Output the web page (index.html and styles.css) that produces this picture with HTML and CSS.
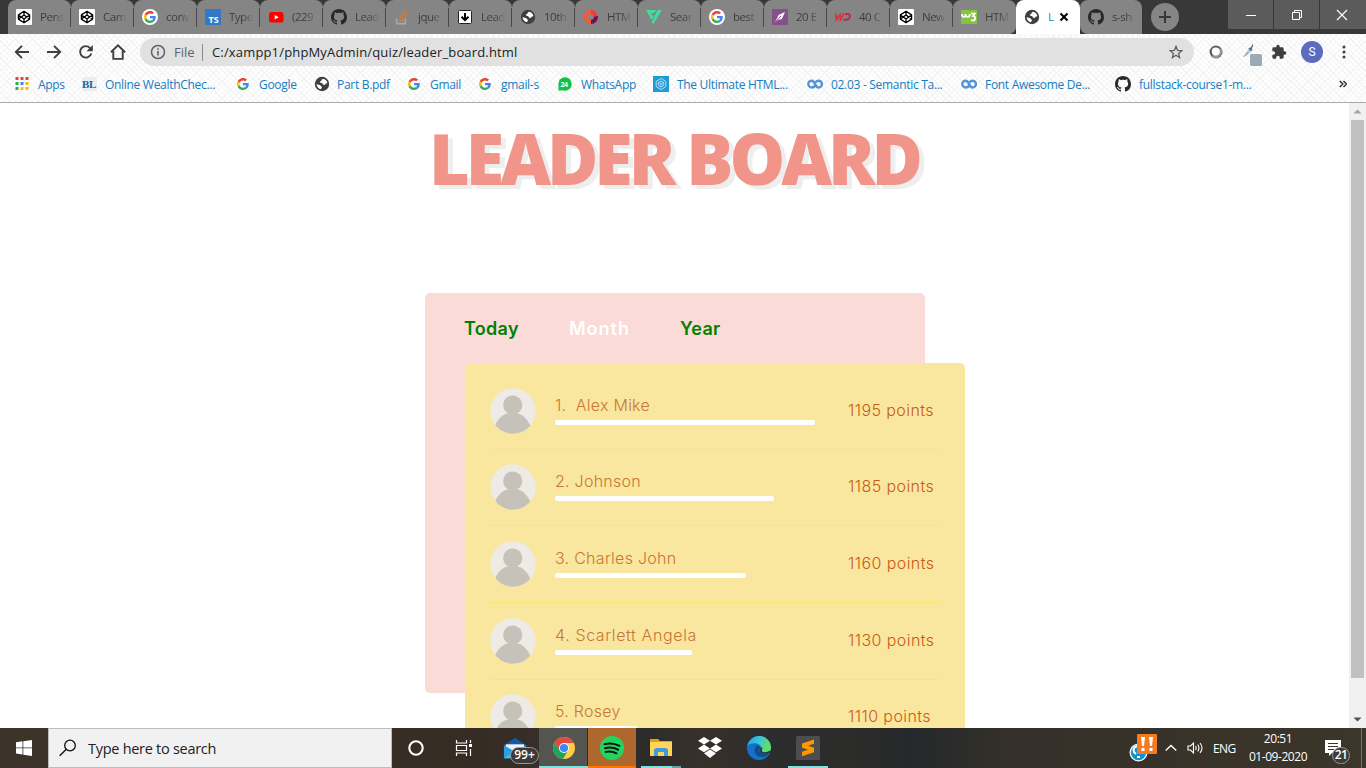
FILE: index.html
```html
<!DOCTYPE html>
<html lang="en">
<head>
<meta charset="utf-8">
<title>Leader Board</title>
<link rel="stylesheet" href="styles.css">
</head>
<body>
<svg class="defs" width="0" height="0">
  <defs>
    <symbol id="codepen" viewBox="0 0 16 16"><rect width="16" height="16" rx="1" fill="#fff"/><path d="M8 2.2 13.6 5.9v4.2L8 13.8 2.4 10.1V5.9zM8 2.2v3.7M8 10.100v3.700M2.400 5.900 8 10.100l5.600-4.200M2.400 10.100 8 5.900l5.600 4.200" fill="none" stroke="#000" stroke-width="1.3" stroke-linejoin="round"/></symbol>
    <symbol id="google" viewBox="0 0 48 48"><path fill="#ea4335" d="M24 9.500c3.500 0 6.700 1.200 9.200 3.600l6.900-6.900C35.900 2.400 30.500 0 24 0 14.600 0 6.500 5.400 2.600 13.200l8 6.200C12.400 13.700 17.700 9.500 24 9.500z"/><path fill="#4285f4" d="M47 24.600c0-1.600-.2-3.100-.4-4.600H24v9h12.900c-.6 3-2.200 5.500-4.700 7.200l7.700 6C44.400 38 47 31.800 47 24.600z"/><path fill="#fbbc05" d="M10.500 28.600c-.5-1.500-.8-3-.8-4.600s.3-3.100.8-4.600l-8-6.200C.9 16.500 0 20.100 0 24s.9 7.500 2.600 10.800z"/><path fill="#34a853" d="M24 48c6.500 0 11.900-2.100 15.900-5.800l-7.700-6c-2.200 1.500-4.900 2.300-8.200 2.300-6.300 0-11.600-4.200-13.500-9.900l-8 6.200C6.500 42.600 14.600 48 24 48z"/></symbol>
    <symbol id="github" viewBox="0 0 16 16"><path fill="#24292e" d="M8 0C3.580 0 0 3.580 0 8c0 3.540 2.290 6.530 5.470 7.590.4.070.55-.17.55-.38 0-.19-.01-.82-.01-1.490-2.010.37-2.530-.49-2.690-.94-.09-.23-.48-.94-.82-1.130-.28-.15-.68-.52-.01-.53.63-.01 1.080.58 1.230.82.720 1.210 1.870.87 2.330.66.070-.52.280-.87.510-1.070-1.780-.2-3.640-.89-3.640-3.950 0-.87.310-1.590.82-2.150-.08-.2-.36-1.020.08-2.120 0 0 .67-.21 2.200.82.640-.18 1.320-.27 2-.27s1.360.09 2 .27c1.530-1.040 2.200-.82 2.200-.82.440 1.100.16 1.920.08 2.120.51.560.82 1.270.82 2.150 0 3.070-1.870 3.750-3.650 3.950.29.250.54.730.54 1.480 0 1.070-.01 1.930-.01 2.200 0 .21.150.46.550.38A8.010 8.010 0 0 0 16 8c0-4.420-3.580-8-8-8z"/></symbol>
    <symbol id="globe" viewBox="0 0 16 16"><circle cx="8" cy="8" r="7.200" fill="#3f3f3f"/><path class="land" d="M8.800 2.800c2.600.2 4.300 2.300 4.600 4.400l-1.500.4-1.100 1.300-2-.3-.6-1.500-1.600 0-.8-1.500 1.600-.9.300-1zM2.500 8.200l3.300.7 1.500 1.300.7.800-1 2.200C4.500 12.800 2.800 10.800 2.500 8.200z"/></symbol>
    <symbol id="youtube" viewBox="0 0 16 16"><rect x="1" y="3" width="14.500" height="10.500" rx="2.500" fill="#f00"/><path d="M6.700 5.900v4.600l4-2.300z" fill="#fff"/></symbol>
    <symbol id="coursera" viewBox="0 0 16 10"><path d="M8.300 6.500C7.300 8 6 8.500 4.700 8.500a3.400 3.400 0 1 1 0-6.800c3.600 0 3.300 6.800 6.800 6.800a3.400 3.400 0 1 0 0-6.800c-1.200 0-2.200.7-2.900 1.600" fill="none" stroke="#5294d6" stroke-width="2.400"/></symbol>
    <symbol id="person" viewBox="0 0 46 46"><clipPath id="disc"><circle cx="23" cy="23" r="22.700"/></clipPath><circle cx="23" cy="23" r="22.700" fill="#eeebe6"/><g clip-path="url(#disc)" fill="#c6c2ba"><circle cx="22.700" cy="17" r="9.600"/><path d="M18 22h9.500v3.500c6 1 11 7 13.300 13.500L38 46H8L4.500 39C7 32 12 26.500 18 25.500z"/></g></symbol>
  </defs>
</svg>

<div class="screen">
  <header class="browser">
    <div class="tabstrip">
      <div class="tabs">
        <div class="tab"><svg class="fav"><use href="#codepen"/></svg><span>Pens</span></div>
        <div class="tab"><svg class="fav"><use href="#codepen"/></svg><span>Cam</span></div>
        <div class="tab"><svg class="fav" viewBox="0 0 16 16"><circle cx="8" cy="8" r="8" fill="#fff"/><use href="#google" x="2" y="2" width="12" height="12"/></svg><span>con<small>v</small></span></div>
        <div class="tab"><svg class="fav" viewBox="0 0 16 16"><rect width="16" height="16" fill="#3178c6"/><text x="3.600" y="14" class="ts">TS</text></svg><span>Type</span></div>
        <div class="tab"><svg class="fav"><use href="#youtube"/></svg><span>(229</span></div>
        <div class="tab"><svg class="fav"><use href="#github"/></svg><span>Lead</span></div>
        <div class="tab"><svg class="fav" viewBox="0 0 16 16"><path d="M2.500 9.500v5.200h9V9.500" fill="none" stroke="#aaa" stroke-width="1.400"/><path d="M4 12.700h6M4.300 10.200l6 1M5.200 7.100l5.400 2.700M7.200 3.900l4.500 4M10.300 1.300l2.900 5" stroke="#e87922" stroke-width="1.200"/></svg><span>jque</span></div>
        <div class="tab"><svg class="fav" viewBox="0 0 16 16"><rect x="1.500" y="1.500" width="13" height="13" rx="1" fill="#fff" stroke="#222"/><path d="M8 4v7M4.500 7.700 8 11.200l3.500-3.500" fill="none" stroke="#000" stroke-width="2"/></svg><span>Lead</span></div>
        <div class="tab"><svg class="fav gray"><use href="#globe"/></svg><span>10th</span></div>
        <div class="tab"><svg class="fav" viewBox="0 0 16 16"><path d="M8 15A7 7 0 1 1 8 .8v4.400a3 3 0 1 0 0 5.600z" fill="#ff5436"/><path d="M8 .8a7.100 7.100 0 0 1 5 11.500L10 10a3 3 0 0 0-2-4.800z" fill="#f23b42"/><path d="M15 7c0 5-3 8-7 8v-4.200c2 0 3-1 3-3z" fill="#6d1550"/></svg><span>HTM</span></div>
        <div class="tab"><svg class="fav" viewBox="0 0 16 16"><path d="M0 1h10L8.500 4H5.200l2.200 4L5.500 11zM11.500 1H16L7 15.500 5.800 13 8 9h-.8l1.300-2.800H9z" fill="#42dc9c"/></svg><span>Sear</span></div>
        <div class="tab"><svg class="fav" viewBox="0 0 16 16"><circle cx="8" cy="8" r="8" fill="#fff"/><use href="#google" x="2" y="2" width="12" height="12"/></svg><span>best</span></div>
        <div class="tab"><svg class="fav" viewBox="0 0 16 16"><rect width="16" height="16" fill="#86508c"/><path d="M13 3 9.800 10 6 11 3 13l2-3.500L6.500 6z" fill="#fff"/><path d="M4 12.500 9 7" stroke="#86508c"/></svg><span>20 E</span></div>
        <div class="tab"><svg class="fav" viewBox="0 0 16 16"><path d="M.5 4.500 1.500 10.500 5 6l.5 4.500L9 4.500" fill="none" stroke="#d83349" stroke-width="2"/><path d="M10 5h3c3 0 2.500 5.700-2 5.700H8.500" fill="none" stroke="#c42942" stroke-width="2"/></svg><span>40 C</span></div>
        <div class="tab"><svg class="fav"><use href="#codepen"/></svg><span>New</span></div>
        <div class="tab last"><svg class="fav" viewBox="0 0 16 16"><rect y="1" width="16" height="14" fill="#86c440"/><path d="M1 5c0 4 3.500 4 3.500 0 0 4 4.300 4 4.300 0M10 4.500h4L12 7c3 0 3 5-.5 4.500L10 11" fill="none" stroke="#fff" stroke-width="1.700"/></svg><span>HTM</span></div>
      </div>
      <div class="tab active"><svg class="fav"><use href="#globe"/></svg><span>L</span><svg class="close" viewBox="0 0 10 10"><path d="m1.500 1.500 7 7m0-7-7 7" stroke="#000" stroke-width="2"/></svg></div>
      <div class="tab after"><svg class="fav"><use href="#github"/></svg><span>s-sh</span></div>
      <div class="newtab"><svg viewBox="0 0 28 28"><circle cx="14" cy="14" r="14" fill="#858585"/><path d="M14 8v12M8 14h12" stroke="#383838" stroke-width="2"/></svg></div>
      <div class="winbtns">
        <i><svg viewBox="0 0 12 12"><path d="M1 6.500h10" stroke="#fff"/></svg></i>
        <i><svg viewBox="0 0 12 12"><path d="M1.500 3.500h7v7h-7zM3.500 3.500v-2h7v7h-2" fill="none" stroke="#fff"/></svg></i>
        <i><svg viewBox="0 0 12 12"><path d="m1 1 10 10m0-10L1 11" stroke="#fff" stroke-width="1.200"/></svg></i>
      </div>
    </div>

    <div class="toolbar">
      <svg class="nav" viewBox="0 0 16 16"><path d="M15 8H2M8 1.800 1.800 8 8 14.200" fill="none" stroke="#3c4043" stroke-width="1.900"/></svg>
      <svg class="nav" viewBox="0 0 16 16"><path d="M1 8h13M8 1.800 14.200 8 8 14.200" fill="none" stroke="#3c4043" stroke-width="1.900"/></svg>
      <svg class="nav" viewBox="0 0 16 16"><path d="M13.300 9.500A5.700 5.700 0 1 1 12.300 4.300L14 6" fill="none" stroke="#3c4043" stroke-width="1.900"/><path d="M14.800 1v6.300H8.500z" fill="#3c4043"/></svg>
      <svg class="nav" viewBox="0 0 16 16"><path d="M.9 8.200 8 1.300l7.100 6.900M3.300 7v7.900h9.400V7" fill="none" stroke="#3c4043" stroke-width="1.900"/></svg>
      <div class="address">
        <svg class="info" viewBox="0 0 16 16"><circle cx="8" cy="8" r="6.500" fill="none" stroke="#5f6368" stroke-width="1.500"/><path d="M8 7v4.500M8 4.200v1.600" stroke="#5f6368" stroke-width="1.600"/></svg>
        <span class="scheme">File</span><span class="url">C:/xampp1/phpMyAdmin/quiz/leader_board.html</span>
        <svg class="star" viewBox="0 0 14 14"><path d="m7 1.300 1.600 4 4.200.3-3.200 2.800 1 4.200L7 10.300l-3.600 2.300 1-4.200L1.200 5.600l4.200-.3z" fill="none" stroke="#5f6368" stroke-width="1.300"/></svg>
      </div>
      <svg class="ext ring" viewBox="0 0 14 14"><circle cx="7" cy="7" r="6.500" fill="#5f5f5f"/><path d="M12 3a6.500 6.500 0 0 1-9.500 8.500z" fill="#999"/><circle cx="6.800" cy="6.500" r="4" fill="#fff"/></svg>
      <svg class="ext picker" viewBox="0 0 20 22"><path d="m10.500 0 .8 1.200-1.300 3.600.4 1.200-1.400 1.500-2.800-2.800L7.700 3.500l1.100.1z" fill="#5b7187"/><path d="m6.500 5.500 2.300 2.300-4 3.700-1.500-2z" fill="#a8c6dd"/><path d="m5.500 8-4 4.500L3.500 12l2.500-2.500z" fill="#53bbd9" stroke="#e7a2b7" stroke-width=".8"/><rect x="8" y="10" width="12" height="12" rx="1.500" fill="#9aabb5"/></svg>
      <svg class="ext puzzle" viewBox="0 0 24 24"><path fill="#3c4043" d="M20.500 11H19V7a2 2 0 0 0-2-2h-4V3.500a2.500 2.500 0 0 0-5 0V5H4a2 2 0 0 0-2 2v3.800h1.500a2.700 2.700 0 0 1 0 5.400H2V20c0 1.100.9 2 2 2h3.800v-1.500a2.700 2.700 0 0 1 5.400 0V22H17a2 2 0 0 0 2-2v-4h1.500a2.500 2.500 0 0 0 0-5z"/></svg>
      <div class="profile">S</div>
      <svg class="dots" viewBox="0 0 4 14"><circle cx="2" cy="2" r="1.500" fill="#3c4043"/><circle cx="2" cy="7" r="1.500" fill="#3c4043"/><circle cx="2" cy="12" r="1.500" fill="#3c4043"/></svg>
    </div>

    <nav class="bookmarks">
      <a class="apps"><svg viewBox="0 0 14 14"><path d="M.5 0h3v3h-3zM5.500 0h3v3h-3zM10.500 0h3v3h-3z" fill="#ea4335"/><path d="M.5 5h3v3h-3zM.5 10h3v3h-3z" fill="#34a853"/><path d="M5.500 5h3v3h-3z" fill="#4285f4"/><path d="M10.500 5h3v3h-3zM5.500 10h3v3h-3zM10.500 10h3v3h-3z" fill="#fbbc05"/></svg>Apps</a>
      <a class="wealth"><b>BL</b>Online WealthChec...</a>
      <a class="goog"><svg><use href="#google"/></svg>Google</a>
      <a class="pdf"><svg><use href="#globe"/></svg>Part B.pdf</a>
      <a class="gm"><svg><use href="#google"/></svg>Gmail</a>
      <a class="gms"><svg><use href="#google"/></svg>gmail-s</a>
      <a class="wa"><svg viewBox="0 0 14 14"><circle cx="7" cy="7" r="6.700" fill="#12c143"/><path d="M.5 9v4.500H5z" fill="#12c143"/><text x="2.400" y="9.800" class="n24">24</text></svg>WhatsApp</a>
      <a class="ult"><svg viewBox="0 0 16 16"><rect width="16" height="16" fill="#219bd5"/><path d="m8 2.500 4.800 2.800v5.400L8 13.500l-4.800-2.800V5.300zM8 5l2.700 1.500v3L8 11 5.300 9.500v-3zM5.300 6.500 8 8l2.700-1.500M8 8v3" fill="none" stroke="#bce4f6" stroke-width=".9"/></svg>The Ultimate HTML...</a>
      <a class="sem"><svg><use href="#coursera"/></svg>02.03 - Semantic Ta...</a>
      <a class="fa"><svg><use href="#coursera"/></svg>Font Awesome De...</a>
      <a class="full"><svg><use href="#github"/></svg>fullstack-course1-m...</a>
      <svg class="more" viewBox="0 0 8 8"><path d="m.8 1 3 3-3 3M4.500 1l3 3-3 3" fill="none" stroke="#333" stroke-width="1.500"/></svg>
    </nav>
  </header>

  <main class="viewport">
    <div class="page">
      <h1>LEADER BOARD</h1>
      <section class="board">
        <div class="periods"><span class="today">Today</span><span class="month">Month</span><span class="year">Year</span></div>
        <div class="list">
          <div class="row"><svg class="avatar"><use href="#person"/></svg><div class="who"><span class="name n1">1.&nbsp; Alex Mike</span><div class="bar" style="width:260px"></div></div><span class="points">1195 points</span></div>
          <div class="row"><svg class="avatar"><use href="#person"/></svg><div class="who"><span class="name n2">2. Johnson</span><div class="bar" style="width:219px"></div></div><span class="points">1185 points</span></div>
          <div class="row"><svg class="avatar"><use href="#person"/></svg><div class="who"><span class="name n3">3. Charles John</span><div class="bar" style="width:191px"></div></div><span class="points">1160 points</span></div>
          <div class="row"><svg class="avatar"><use href="#person"/></svg><div class="who"><span class="name n4">4. Scarlett Angela</span><div class="bar" style="width:137px"></div></div><span class="points">1130 points</span></div>
          <div class="row"><svg class="avatar"><use href="#person"/></svg><div class="who"><span class="name n5">5. Rosey</span><div class="bar" style="width:82px"></div></div><span class="points">1110 points</span></div>
        </div>
      </section>
    </div>
    <div class="scrollbar">
      <svg viewBox="0 0 17 17"><path d="M4.500 10.500h8L8.500 6.500z" fill="#a3a3a3"/></svg>
      <div class="thumb"></div>
      <svg viewBox="0 0 17 17"><path d="M4.500 6.500h8l-4 4z" fill="#505050"/></svg>
    </div>
  </main>

  <footer class="taskbar">
    <div class="start"><svg viewBox="0 0 16 16"><path d="m0 2.300 6.500-1v6.200H0zM7.300 1.200 16 0v7.500H7.300zM0 8.300h6.500v6.200l-6.500-1zM7.300 8.300H16V16l-8.700-1.300z" fill="#fff"/></svg></div>
    <div class="search"><svg viewBox="0 0 18 18"><circle cx="11" cy="6.500" r="5.300" fill="none" stroke="#111" stroke-width="1.300"/><path d="m7.300 10.200-6.600 6.600" stroke="#111" stroke-width="1.400"/></svg><span>Type here to search</span></div>
    <div class="app cortana"><svg viewBox="0 0 24 24"><circle cx="12" cy="12" r="6.700" fill="none" stroke="#fff" stroke-width="2.100"/></svg></div>
    <div class="app tasks"><svg viewBox="0 0 24 24"><path d="M4.500 4v3h10V4M4.500 20v-3h10v3M4.500 9.500h10v5h-10zM18.500 4v3M18.500 13v7" fill="none" stroke="#fff" stroke-width="1.200"/><path d="M17 8h3v3h-3z" fill="#fff"/></svg></div>
    <div class="app mail"><svg viewBox="0 0 26 24"><path d="M1 9 13 1l12 8v4H1z" fill="#0f5ca8"/><path d="M3 8h20v8H3z" fill="#f2f2f2"/><path d="m1 9 12 7 12-7v14H1z" fill="#24a0e5"/><path d="m1 23 12-8 12 8z" fill="#41bdf4"/></svg><em>99+</em></div>
    <div class="app chrome"><svg viewBox="0 0 24 24"><circle cx="12" cy="12" r="11" fill="#ffcd46"/><path d="M12 1A11 11 0 0 0 2.500 6.500L7.700 15 12 7h9.800A11 11 0 0 0 12 1z" fill="#e04a3f"/><path d="M2.500 6.500A11 11 0 0 0 11 23l5-8.500-8.300 0z" fill="#1da362"/><circle cx="12" cy="12" r="5" fill="#fff"/><circle cx="12" cy="12" r="4.100" fill="#4285f4"/></svg></div>
    <div class="app spotify"><svg viewBox="0 0 24 24"><circle cx="12" cy="12" r="12" fill="#1ed760"/><path d="M4.500 8.200c5-1.400 10-1 15 1.600M5 12.200c4.500-1.200 8.800-.8 13 1.500M5.700 15.900c3.700-.9 7.200-.6 10.800 1.400" fill="none" stroke="#111" stroke-width="2" stroke-linecap="round"/></svg></div>
    <div class="app folder"><svg viewBox="0 0 24 24"><path d="M1 3h8l2 2h12v15H1z" fill="#e3a20c"/><path d="M1 6h22v14H1z" fill="#ffd45b"/><path d="M5 20v-6.500L7 12h10l2 1.500V20h-4v-4H9v4z" fill="#3f9be0"/></svg></div>
    <div class="app"><svg viewBox="0 0 24 24"><path d="m6 1 6 3.800-6 3.800L0 4.800zM18 1l6 3.800-6 3.800-6-3.800zM6 8.600l6 3.800-6 3.800-6-3.800zM18 8.600l6 3.800-6 3.800-6-3.800zM6 17.300l6-3.800 6 3.800-6 4.700z" fill="#fff"/></svg></div>
    <div class="app"><svg viewBox="0 0 24 24"><defs><linearGradient id="eg" x1="0" y1="0" x2="1" y2=".4"><stop offset="0" stop-color="#2399e0"/><stop offset=".5" stop-color="#36c7d8"/><stop offset="1" stop-color="#66e05c"/></linearGradient></defs><circle cx="12" cy="12" r="12" fill="#1471c8"/><path d="M.2 10A12 12 0 0 1 24 11c.3 4-3 6-6.500 6-3 0-5-1-3.500-3C16 10 11 6 5 7.500 2.500 8 1 9 .2 10z" fill="url(#eg)"/><path d="M9 10c-4 5 0 12 7 11 2.500 0 5-2 6.500-4-3 1.500-7 1.300-9-.5-1.800-1.500-1-3 0-4.200C13 10 11 9 9 10z" fill="#124c91"/><path d="M14 12c1.500 1-1 2 0 3.500 2 2.500 6.500 1.500 9 0" fill="none" stroke="#2b2c2e" stroke-width="1.600"/></svg></div>
    <div class="app sublime"><svg viewBox="0 0 24 24"><rect width="24" height="24" rx="1.500" fill="#4d4d4f"/><path d="m6 7.500 12-4v4.200l-6 2 6 2v4.500l-12 4v-4.500l6-2-6-2z" fill="#ff9800"/></svg></div>
    <div class="tray">
      <svg class="alert" viewBox="0 0 28 28"><circle cx="9.500" cy="18.500" r="9" fill="#fff"/><circle cx="9.500" cy="18.500" r="7.700" fill="#1590ce"/><path d="M8 12c-5 2-4 6-1 8M8 23h3" fill="none" stroke="#fff" stroke-width="2"/><rect x="8" width="20" height="20" rx="1" fill="#f47b20"/><path d="M12 3h4l-1 9h-2zM20 3h4l-1 9h-2zM12.500 14h3v3h-3zM20.500 14h3v3h-3z" fill="#fff"/></svg>
      <svg class="caret" viewBox="0 0 12 12"><path d="m.7 8.500 5.300-5 5.300 5" fill="none" stroke="#fff" stroke-width="1.300"/></svg>
      <svg class="volume" viewBox="0 0 17 14"><path d="M1 5h2.500L6.500 2v10L3.500 9H1z" fill="none" stroke="#fff" stroke-width="1.100"/><path d="M8.500 5q1.300 2 0 4M10.700 3.500q2.500 3.500 0 7M13 2q4 5 0 10" fill="none" stroke="#fff" stroke-width="1.100"/></svg>
      <span class="lang">ENG</span>
      <div class="clock"><span>20:51</span><span class="date">01-09-2020</span></div>
      <div class="notes"><svg viewBox="0 0 16 16"><path d="M0 0h16v13H7l-3 3v-3H0z" fill="#fff"/><path d="M3 3.500h10M3 6.500h10M3 9.500h6" stroke="#3a342a"/></svg><em>21</em></div>
    </div>
  </footer>
</div>
</body>
</html>
```
FILE: styles.css
```css
* { box-sizing: border-box; }
body { margin: 0; background: #fff; font-family: "Open Sans", "Noto Sans", sans-serif; overflow: hidden; }
svg { display: block; flex: none; }
.defs { position: absolute; }
.screen { width: 1366px; height: 768px; display: flex; flex-direction: column; }

.browser {
  height: 103px; flex: none; border-bottom: 1px solid #a9a9a9; background-color: #fff;
  background-image: repeating-linear-gradient(45deg, transparent 0 3px, #f3f3f3 3px 4px), repeating-linear-gradient(-45deg, transparent 0 3px, #f5f5f5 3px 4px);
}
.tabstrip { height: 34px; display: flex; background: linear-gradient(90deg, #383838 1000px, transparent 1000px 1100px, #383838 1100px); padding-left: 8px; }
.tabs { display: flex; background: linear-gradient(#383838 8px, #858585 8px); border-radius: 0 0 8px 0; }
.tab { width: 63px; height: 34px; display: flex; align-items: center; padding-left: 8px; background: #858585; border-radius: 8px 8px 0 0; position: relative; }
.tabs .tab::after { content: ""; position: absolute; right: 0; top: 8px; width: 1px; height: 19px; background: #484848; }
.tabs .last { border-radius: 8px 8px 8px 0; }
.tabs .last::after { display: none; }
.fav { width: 16px; height: 16px; }
.tab span { margin-left: 8px; width: 25px; white-space: nowrap; font-size: 11.500px; line-height: 20px; letter-spacing: -.5px; color: transparent; background: linear-gradient(90deg, #3c3c3c 55%, #7c7c7c 95%); background-clip: text; -webkit-background-clip: text; }
.tab small { font-size: 11px; }
.land { fill: #fff; }
.gray .land { fill: #858585; }
.ts { font: 700 9px "Open Sans", sans-serif; fill: #fff; }
.tab.active { width: 64px; background: #fff; box-shadow: 0 -8px 0 8px transparent; }
.tab.active span { width: 6px; color: #1487d4; background: none; }
.close { width: 10px; height: 10px; margin-left: 5px; }
.tab.after { width: 62px; border-radius: 8px 8px 0 8px; }
.newtab { width: 28px; margin: 3px 0 0 9px; }
.newtab svg { width: 28px; height: 28px; }
.tabstrip { background: #383838; }
.winbtns { margin-left: auto; display: flex; gap: 1px; height: 29px; }
.winbtns i { width: 45px; background: #5b5b5b; display: grid; place-items: center; }
.winbtns i:last-child { width: 46px; padding-right: 2px; }
.winbtns svg { width: 12px; height: 12px; }

.toolbar { height: 36px; display: flex; align-items: center; padding-left: 14px; }
.nav { width: 16px; height: 16px; margin-right: 16px; }
.nav + .address { margin-left: -2px; }
.address { width: 1054px; height: 28px; border-radius: 14px; background: #e1e1e1; display: flex; align-items: center; padding: 0 11px 0 10px; font-size: 13px; }
.info { width: 16px; height: 16px; }
.scheme { margin-left: 8px; width: 29px; height: 17px; line-height: 17px; color: #5f6368; border-right: 1px solid #8a8a8a; }
.url { margin-left: 9px; color: #202124; letter-spacing: .16px; line-height: 17px; }
.star { width: 14px; height: 14px; margin-left: auto; }
.ring { width: 14px; height: 14px; margin-left: 15px; }
.picker { width: 20px; height: 22px; margin: 5px 0 0 19px; }
.puzzle { width: 16px; height: 16px; margin-left: 9px; }
.profile { width: 22px; height: 22px; margin-left: 14px; border-radius: 50%; background: #5c6bc0; color: #fff; font: 12px/22px Roboto, sans-serif; text-align: center; }
.dots { width: 4px; height: 14px; margin-left: 19px; }

.bookmarks { height: 28px; display: flex; align-items: center; padding-left: 15px; font-size: 12px; color: #157dc1; }
.bookmarks a { display: flex; align-items: center; gap: 8px; white-space: nowrap; flex: none; letter-spacing: -.3px; }
.bookmarks a svg { width: 14px; height: 14px; }
.bookmarks a.goog svg, .bookmarks a.gm svg, .bookmarks a.gms svg { width: 12px; height: 12px; margin-right: 2px; }
.bookmarks a.apps { width: 67px; gap: 9px; }
.bookmarks .pdf svg { width: 16px; height: 16px; margin: 0 -1px; }
.wealth { width: 155px; }
.wealth b { width: 15px; height: 14px; background: #e9eef2; color: #14649c; font: 700 11px/14px "Liberation Serif", serif; }
.goog { width: 78px; }
.pdf { width: 93px; }
.gm { width: 71px; }
.gms { width: 79px; }
.bookmarks a.wa { width: 95px; gap: 9px; }
.n24 { font: 700 7px "Open Sans", sans-serif; fill: #fff; }
.ult { width: 154px; }
.bookmarks .ult svg, .bookmarks .full svg, .bookmarks .sem svg, .bookmarks .fa svg { width: 16px; height: 16px; }
.bookmarks .sem svg, .bookmarks .fa svg { height: 10px; }
.sem, .fa { width: 154px; }
.full { width: 224px; }
.more { width: 8px; height: 8px; }

.viewport { height: 625px; flex: none; display: flex; }
.page { width: 1349px; overflow: hidden; }
h1 { margin: 7px 0 0 429px; height: 96px; font: 800 70px/96px "Open Sans", sans-serif; letter-spacing: -4px; color: #f1948a; text-shadow: 5px 4px #eee; white-space: nowrap; }
.board { width: 500px; height: 400px; margin: 87px 0 0 425px; background: #fadbd8; border-radius: 5px; padding-left: 40px; }
.periods { height: 70px; display: flex; line-height: 71px; font-family: Inter, sans-serif; font-size: 18px; font-weight: 600; color: green; }
.today { width: 105px; letter-spacing: .3px; margin-left: -1px; }
.month { width: 111px; color: #fff; letter-spacing: 1px; }
.year { letter-spacing: .3px; }
.list { width: 500px; height: 500px; background: #f9e79f; border-radius: 5px; padding: 10px 25px; font-family: Inter, sans-serif; }
.row { height: 76.700px; width: 449px; display: flex; padding-top: 14.500px; border-bottom: 1.500px solid #fde66c; }
.avatar { width: 46px; height: 46px; margin-left: -.5px; }
.who { margin-left: 19.500px; width: 293px; }
.name { display: block; height: 32px; line-height: 34px; font-size: 16px; font-weight: 300; color: #c97636; white-space: nowrap; }
.n1 { letter-spacing: .25px; }
.n2 { letter-spacing: .25px; }
.n3 { letter-spacing: .28px; }
.n4 { letter-spacing: .62px; }
.n5 { letter-spacing: .25px; }
.bar { height: 5px; background: #fff; border-radius: 2px; }
.points { line-height: 44px; font-size: 16px; font-weight: 300; letter-spacing: .42px; color: #ca5a16; white-space: nowrap; }
.scrollbar { width: 17px; background: #f1f1f1; display: flex; flex-direction: column; }
.scrollbar svg { width: 17px; height: 17px; }
.thumb { width: 13px; height: 558px; margin: 0 2px auto; background: #c1c1c1; }

.taskbar { height: 40px; flex: none; display: flex; background: linear-gradient(90deg, #3c3429 0, #352c24 480px, #38302a 590px, #2c2c2b 650px, #38302a 700px, #2b2c2c 780px, #2b2b2a 870px, #24292b 910px, #343029 1010px, #3c352a 1366px); color: #fff; }
.start { width: 48px; display: grid; place-items: center; }
.start svg { width: 16px; height: 16px; }
.search { width: 344px; background: #f1f1f1; border: 1px solid #bcbcbc; display: flex; align-items: center; padding-left: 10px; color: #222; font-size: 14.500px; }
.search svg { width: 18px; height: 18px; }
.search span { margin-left: 11px; letter-spacing: -.28px; }
.app { width: 49px; display: grid; place-items: center; position: relative; }
.app svg { width: 24px; height: 24px; }
.cortana { width: 48px; }
.tasks { width: 48px; margin-right: 3px; }
.mail em { position: absolute; left: 19px; top: 19px; width: 29px; height: 17px; border: 1px solid #999; border-radius: 9px; background: #3c3a36; font: 600 12px/14px "Open Sans", sans-serif; text-align: center; z-index: 1; }
.chrome { background: #555550; box-shadow: inset 0 -2px #83e0e0, inset -1px 0 #332c26; }
.spotify { width: 48px; background: #ae672c; box-shadow: inset 0 -2px #ff7500; }
.folder { background: linear-gradient(90deg, #83e0e0 31px, #64a4a4 31px) 5px 38px / 40px 2px no-repeat; }
.sublime { background: linear-gradient(#83e0e0, #83e0e0) 5px 38px / 40px 2px no-repeat; }
.mail { width: 49px; margin-right: -1px; padding-right: 2px; }
.tray { margin-left: auto; width: 237px; display: flex; align-items: center; }
.alert { width: 28px; height: 28px; }
.caret { width: 12px; height: 12px; margin-left: 8px; }
.volume { width: 17px; height: 14px; margin-left: 10px; }
.lang { margin-left: 9px; width: 30px; font-size: 12px; letter-spacing: -.6px; }
.clock { width: 70px; display: flex; flex-direction: column; align-items: center; font-size: 12px; line-height: 18px; letter-spacing: -.45px; }
.notes { margin-left: 12px; position: relative; }
.notes svg { width: 16px; height: 16px; }
.notes em { position: absolute; left: 7px; top: 7px; width: 18px; height: 17px; border: 1px solid #999; border-radius: 9px; background: #3c3a36; font: 600 12px/14px "Open Sans", sans-serif; text-align: center; letter-spacing: -.5px; }
.tray::after { content: ""; align-self: stretch; width: 1px; background: #777167; margin: 0 4px 0 auto; }
```
